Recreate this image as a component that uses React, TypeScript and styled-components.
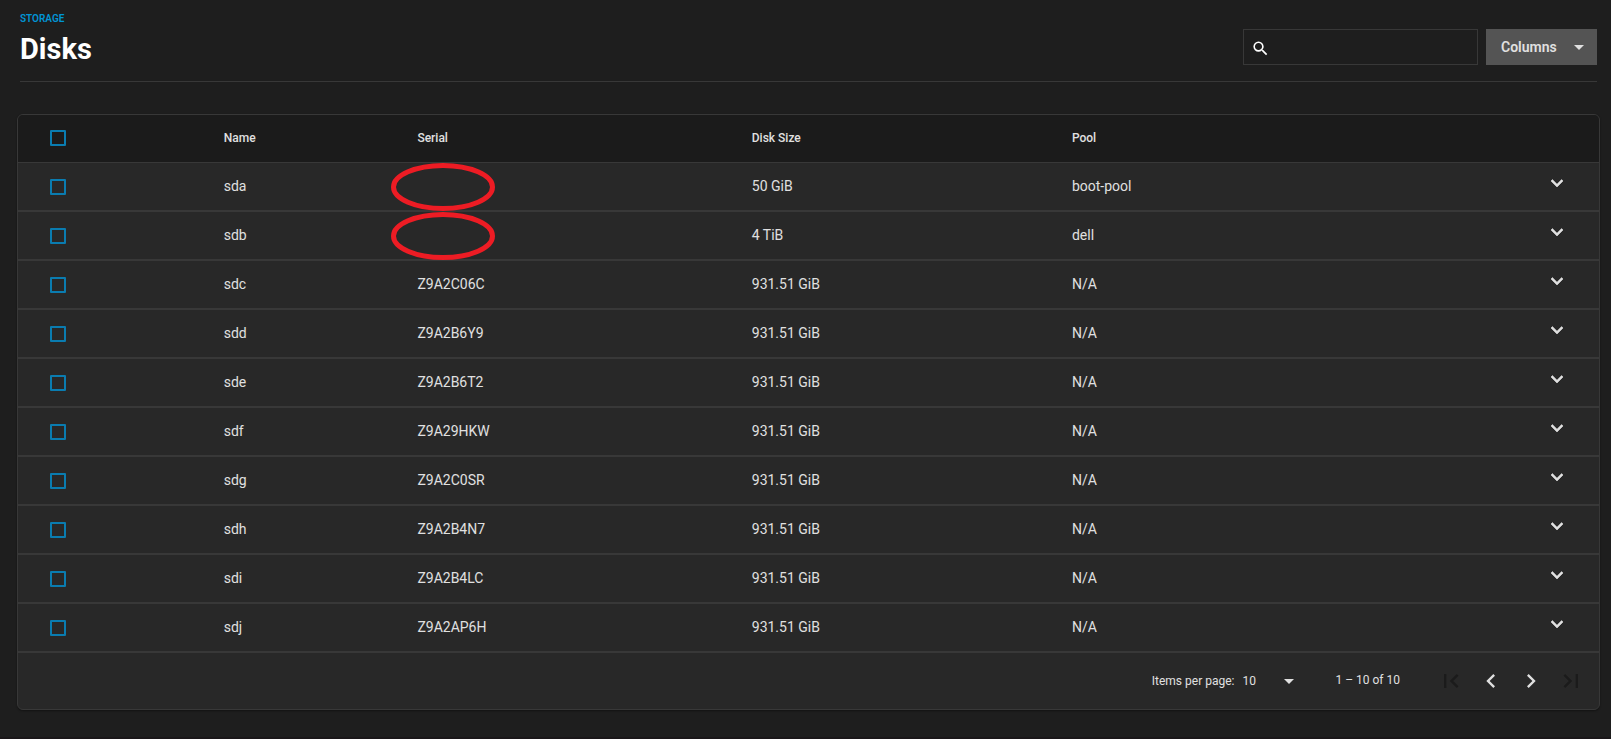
import React, { useState } from "react";
import styled, { createGlobalStyle } from "styled-components";

const GlobalStyle = createGlobalStyle`
  *, *::before, *::after { box-sizing: border-box; }
  body {
    margin: 0;
    background: #1e1e1e;
    color: #e0e0e0;
    font-family: Roboto, "Liberation Sans", sans-serif;
    font-size: 14px;
  }
  button, input, select { font: inherit; color: inherit; }
`;

const Page = styled.main`
  min-height: 100vh;
  padding: 12px 11px 24px 17px;
  border-bottom: 2px solid #1a1719;
`;

const Header = styled.header`
  display: flex;
  justify-content: space-between;
  align-items: flex-start;
  height: 70px;
  margin: 0 3px 32px;
  border-bottom: 1px solid #383838;
`;

const Breadcrumb = styled.a`
  display: block;
  color: #0095d5;
  font-size: 10px;
  font-weight: 600;
  line-height: 14px;
  text-decoration: none;
  text-transform: uppercase;
`;

const Title = styled.h1`
  margin: 6px 0 0;
  color: #fff;
  font-size: 29px;
  font-weight: 700;
  line-height: 34px;
`;

const Actions = styled.div`
  display: flex;
  gap: 8px;
  padding-top: 17px;
`;

const SearchBox = styled.label`
  display: flex;
  align-items: center;
  gap: 8px;
  width: 235px;
  height: 36px;
  padding: 2px 7px 0;
  border: 1px solid #383838;
  color: #fff;
`;

const SearchInput = styled.input`
  flex: 1;
  min-width: 0;
  padding: 0;
  border: 0;
  outline: 0;
  background: transparent;
`;

const ColumnsButton = styled.button`
  display: flex;
  align-items: center;
  justify-content: space-between;
  width: 111px;
  height: 36px;
  padding: 0 6px 0 15px;
  border: 0;
  background: #545454;
  font-weight: 600;
`;

const Card = styled.section`
  overflow: hidden;
  border: 1px solid #383838;
  border-radius: 6px;
  background: #282828;
  box-shadow: 0 1px 2px rgba(0, 0, 0, 0.4);
`;

const Table = styled.table`
  width: 100%;
  table-layout: fixed;
  border-collapse: separate;
  border-spacing: 0;
`;

const Col = styled.col<{ $share?: string }>`
  width: ${(p) => p.$share ?? "auto"};
`;

const HeadCell = styled.th`
  height: 48px;
  padding: 0 16px 2px;
  border-bottom: 1px solid #383838;
  background: #1b1b1b;
  font-size: 12px;
  font-weight: 500;
  text-align: left;
  vertical-align: middle;
`;

const Cell = styled.td`
  position: relative;
  height: 49px;
  padding: 0 16px 2px;
  border-bottom: 2px solid #383838;
  vertical-align: middle;
`;

const ControlCell = styled(Cell)`
  padding-bottom: 0;
`;

const CheckWrap = styled.span`
  display: flex;
  padding-left: 16px;
`;

const Checkbox = styled.input.attrs({ type: "checkbox" })`
  appearance: none;
  width: 16px;
  height: 16px;
  margin: 0;
  border: 2px solid #0a7cb0;
  border-radius: 1px;
  &:checked { background: #0a7cb0; }
`;

const ExpandButton = styled.button`
  display: flex;
  margin: 0 14px 8px auto;
  padding: 0;
  border: 0;
  background: transparent;
  path { stroke: currentColor; stroke-width: 0.6; }
`;

const Ring = styled.svg`
  position: absolute;
  top: 0;
  left: -10px;
  pointer-events: none;
`;

const Paginator = styled.footer`
  display: flex;
  align-items: center;
  justify-content: flex-end;
  height: 56px;
  padding-right: 8px;
  font-size: 12px;
`;

const PageSize = styled.label`
  display: flex;
  align-items: center;
  gap: 8px;
`;

const SelectBox = styled.span`
  position: relative;
  display: flex;
  align-items: center;
  width: 59px;
  svg { position: absolute; right: 0; pointer-events: none; }
`;

const Select = styled.select`
  appearance: none;
  width: 100%;
  padding: 0;
  border: 0;
  outline: 0;
  background: #282828;
`;

const Range = styled.span`
  margin: 0 31px 0 34px;
  padding-bottom: 2px;
`;

const PageButton = styled.button`
  display: flex;
  align-items: center;
  justify-content: center;
  width: 40px;
  height: 40px;
  padding: 0;
  border: 0;
  background: transparent;
  &:disabled { color: #1b1b1b; }
`;

const paths = {
  search:
    "M9.5 3A6.5 6.5 0 0 1 16 9.5c0 1.61-.59 3.09-1.56 4.23l.27.27h.79l5 5-1.5 1.5-5-5v-.79l-.27-.27A6.52 6.52 0 0 1 9.5 16a6.5 6.5 0 0 1 0-13m0 2C7 5 5 7 5 9.500s2 4.500 4.500 4.500S14 12 14 9.500 12 5 9.500 5z",
  caret: "M7 10l5 5 5-5z",
  expand: "M7.410 8.580L12 13.170l4.590-4.590L18 10l-6 6-6-6z",
  first: "M18.410 16.590L13.820 12l4.590-4.590L17 6l-6 6 6 6zM6 6h2v12H6z",
  prev: "M15.410 7.410L14 6l-6 6 6 6 1.410-1.410L10.830 12z",
  next: "M10 6L8.590 7.410 13.170 12l-4.580 4.590L10 18l6-6z",
  last: "M5.590 7.410L10.180 12l-4.590 4.590L7 18l6-6-6-6zM16 6h2v12h-2z",
};

function Icon({ name, size = 24 }: { name: keyof typeof paths; size?: number }) {
  return (
    <svg width={size} height={size} viewBox="0 0 24 24" fill="currentColor" aria-hidden="true">
      <path d={paths[name]} />
    </svg>
  );
}

interface Disk {
  name: string;
  serial: string;
  size: string;
  pool: string;
}

const disks: Disk[] = [
  { name: "sda", serial: "", size: "50 GiB", pool: "boot-pool" },
  { name: "sdb", serial: "", size: "4 TiB", pool: "dell" },
  { name: "sdc", serial: "Z9A2C06C", size: "931.51 GiB", pool: "N/A" },
  { name: "sdd", serial: "Z9A2B6Y9", size: "931.51 GiB", pool: "N/A" },
  { name: "sde", serial: "Z9A2B6T2", size: "931.51 GiB", pool: "N/A" },
  { name: "sdf", serial: "Z9A29HKW", size: "931.51 GiB", pool: "N/A" },
  { name: "sdg", serial: "Z9A2C0SR", size: "931.51 GiB", pool: "N/A" },
  { name: "sdh", serial: "Z9A2B4N7", size: "931.51 GiB", pool: "N/A" },
  { name: "sdi", serial: "Z9A2B4LC", size: "931.51 GiB", pool: "N/A" },
  { name: "sdj", serial: "Z9A2AP6H", size: "931.51 GiB", pool: "N/A" },
];

export default function App() {
  const [selected, setSelected] = useState<string[]>([]);
  const allSelected = selected.length === disks.length;
  const toggle = (name: string) =>
    setSelected((s) => (s.includes(name) ? s.filter((n) => n !== name) : [...s, name]));

  return (
    <>
      <GlobalStyle />
      <Page>
        <Header>
          <div>
            <Breadcrumb href="#storage">Storage</Breadcrumb>
            <Title>Disks</Title>
          </div>
          <Actions>
            <SearchBox>
              <Icon name="search" size={19} />
              <SearchInput type="text" aria-label="Search" />
            </SearchBox>
            <ColumnsButton type="button">
              Columns
              <Icon name="caret" />
            </ColumnsButton>
          </Actions>
        </Header>
        <Card>
          <Table>
            <colgroup>
              <Col $share="12%" />
              <Col $share="12.25%" />
              <Col $share="21.15%" />
              <Col $share="20.25%" />
              <Col />
              <Col $share="6%" />
            </colgroup>
            <thead>
              <tr>
                <HeadCell>
                  <CheckWrap>
                    <Checkbox
                      aria-label="Select all disks"
                      checked={allSelected}
                      onChange={() => setSelected(allSelected ? [] : disks.map((d) => d.name))}
                    />
                  </CheckWrap>
                </HeadCell>
                <HeadCell>Name</HeadCell>
                <HeadCell>Serial</HeadCell>
                <HeadCell>Disk Size</HeadCell>
                <HeadCell>Pool</HeadCell>
                <HeadCell />
              </tr>
            </thead>
            <tbody>
              {disks.map((disk) => (
                <tr key={disk.name}>
                  <ControlCell>
                    <CheckWrap>
                      <Checkbox
                        aria-label={`Select ${disk.name}`}
                        checked={selected.includes(disk.name)}
                        onChange={() => toggle(disk.name)}
                      />
                    </CheckWrap>
                  </ControlCell>
                  <Cell>{disk.name}</Cell>
                  <Cell>
                    {disk.serial || (
                      <Ring width="104" height="48" viewBox="0 0 104 48" aria-hidden="true">
                        <ellipse cx="52" cy="24" rx="49.5" ry="21.500" fill="none" stroke="#ed1c24" strokeWidth="5" />
                      </Ring>
                    )}
                  </Cell>
                  <Cell>{disk.size}</Cell>
                  <Cell>{disk.pool}</Cell>
                  <ControlCell>
                    <ExpandButton type="button" aria-label={`Expand ${disk.name}`}>
                      <Icon name="expand" />
                    </ExpandButton>
                  </ControlCell>
                </tr>
              ))}
            </tbody>
          </Table>
          <Paginator>
            <PageSize>
              Items per page:
              <SelectBox>
                <Select defaultValue="10">
                  <option>10</option>
                  <option>20</option>
                  <option>50</option>
                </Select>
                <Icon name="caret" />
              </SelectBox>
            </PageSize>
            <Range>1 – 10 of 10</Range>
            <PageButton type="button" aria-label="First page" disabled>
              <Icon name="first" size={28} />
            </PageButton>
            <PageButton type="button" aria-label="Previous page">
              <Icon name="prev" size={28} />
            </PageButton>
            <PageButton type="button" aria-label="Next page">
              <Icon name="next" size={28} />
            </PageButton>
            <PageButton type="button" aria-label="Last page" disabled>
              <Icon name="last" size={28} />
            </PageButton>
          </Paginator>
        </Card>
      </Page>
    </>
  );
}
